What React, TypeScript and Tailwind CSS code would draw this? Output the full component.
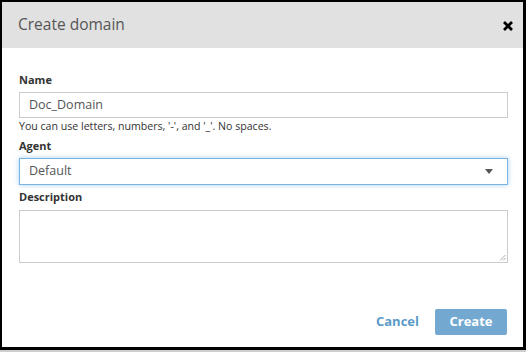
import React from "react";

export default function App() {
  const font = { fontFamily: '"Open Sans", "Noto Sans", sans-serif' };
  return (
    <div className="w-[526px] h-[352px] bg-[#cfcfcf]" style={font}>
      <div className="w-[526px] h-[350px] bg-white border-t-2 border-l-2 border-r-[3px] border-b-[3px] border-black flex flex-col">
        <div className="h-[46px] bg-[#e1e1e1] flex items-center justify-between pl-[16px] pr-[9px]">
          <span className="text-[15.5px] text-[#555555] leading-none">Create domain</span>
          <svg width="12" height="12" viewBox="0 0 12 12" className="mt-[1px]">
            <path d="M2 2 L10 10 M10 2 L2 10" stroke="#000" strokeWidth="2.8" strokeLinecap="butt" />
          </svg>
        </div>
        <div className="flex flex-col pl-[17px] pr-[15px] pt-[24px] flex-1">
          <label className="text-[11px] font-bold text-[#333] leading-[15px]">Name</label>
          <div className="mt-[5px] h-[26px] border border-[#cccccc] flex items-center pl-[9px] text-[12.5px] text-[#555]">
            Doc_Domain
          </div>
          <div className="text-[10.6px] text-[#333] leading-[15px] mt-[1px]">
            You can use letters, numbers, '-', and '_'. No spaces.
          </div>
          <label className="text-[11px] font-bold text-[#333] leading-[15px] mt-[4px]">Agent</label>
          <div className="mt-[5px] h-[27px] border border-[#7db3e0] shadow-[0_0_5px_rgba(102,175,233,0.6)] flex items-center justify-between pl-[9px] pr-[14px] text-[12.5px] text-[#555]">
            <span>Default</span>
            <svg width="8" height="5" viewBox="0 0 8 5">
              <path d="M0 0 L8 0 L4 5 Z" fill="#555" />
            </svg>
          </div>
          <label className="text-[11px] font-bold text-[#333] leading-[15px] mt-[4px]">Description</label>
          <div className="relative mt-[6px] h-[53px] border border-[#cccccc]">
            <svg width="7" height="7" viewBox="0 0 7 7" className="absolute right-[1px] bottom-[1px]">
              <path d="M6.5 1 L1 6.5 M6.5 4 L4 6.5" stroke="#999" strokeWidth="0.8" />
            </svg>
          </div>
          <div className="flex justify-end items-center mt-[46px] gap-[16px]">
            <span className="text-[13px] font-bold text-[#5b9bc8]">Cancel</span>
            <div className="w-[72px] h-[26px] bg-[#73a9d1] rounded-[2px] flex items-center justify-center text-[13px] font-bold text-white mr-[1px]">
              Create
            </div>
          </div>
        </div>
      </div>
    </div>
  );
}
